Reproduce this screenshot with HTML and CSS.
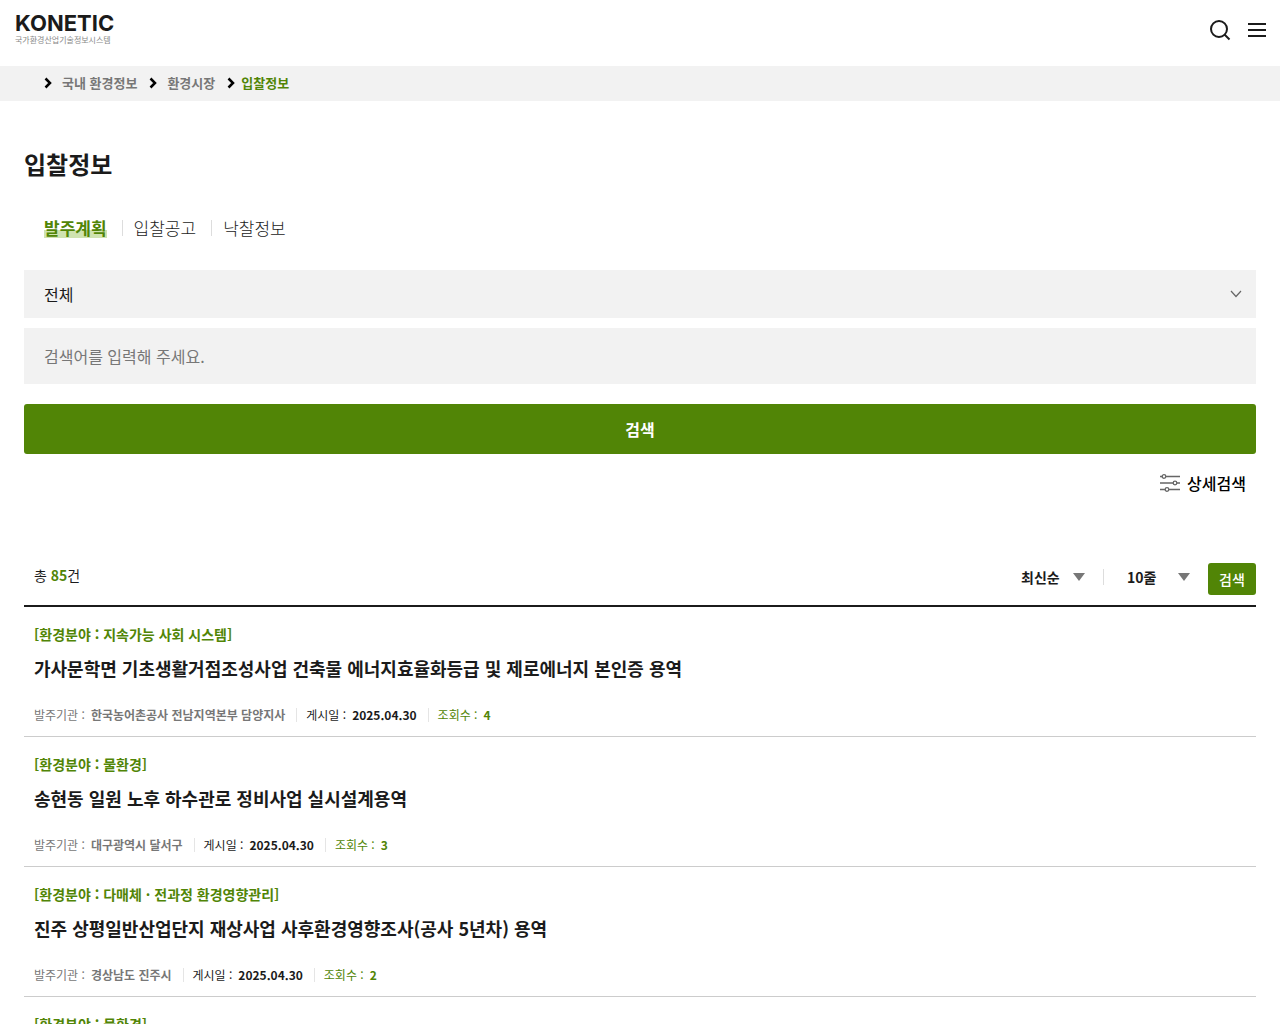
FILE: index.html
```html
<!DOCTYPE html>
<html lang="ko">
<head>
<meta charset="utf-8">
<meta name="viewport" content="width=device-width, initial-scale=1">
<title>입찰정보 | KONETIC</title>
<link rel="stylesheet" href="styles.css">
</head>
<body>
<header class="header">
  <a href="#" class="logo">
    <span class="logo-name">KONETIC</span>
    <span class="logo-sub">국가환경산업기술정보시스템</span>
  </a>
  <div class="header-tools">
    <button type="button" class="icon-button" aria-label="검색 열기">
      <svg width="22" height="22" viewBox="0 0 22 22" fill="none" stroke="#1b1b1b" stroke-width="2"><circle cx="10" cy="10" r="8"/><path d="M15.500 15.500L20.500 20.500"/></svg>
    </button>
    <button type="button" class="icon-button" aria-label="전체 메뉴">
      <svg width="18" height="22" viewBox="0 0 18 22" fill="none" stroke="#1b1b1b" stroke-width="2"><path d="M0 5H18M0 11H18M0 17H18"/></svg>
    </button>
  </div>
</header>

<nav class="breadcrumb" aria-label="현재 위치">
  <svg class="chevron" viewBox="0 0 8 12"><path d="M1.500 1.500L6 6L1.500 10.500"/></svg>
  <a href="#">국내 환경정보</a>
  <svg class="chevron" viewBox="0 0 8 12"><path d="M1.500 1.500L6 6L1.500 10.500"/></svg>
  <a href="#">환경시장</a>
  <svg class="chevron" viewBox="0 0 8 12"><path d="M1.500 1.500L6 6L1.500 10.500"/></svg>
  <a href="#" class="current" aria-current="page">입찰정보</a>
</nav>

<main class="content">
  <h1 class="page-title">입찰정보</h1>

  <nav class="tabs" aria-label="입찰정보 구분">
    <a href="#" class="tab tab-active"><span>발주계획</span></a>
    <a href="#" class="tab">입찰공고</a>
    <a href="#" class="tab">낙찰정보</a>
  </nav>

  <form class="search">
    <div class="select-box">
      <select class="search-select" aria-label="검색 구분"><option>전체</option></select>
      <svg class="select-arrow" width="12" height="8" viewBox="0 0 12 8" fill="none" stroke="#666" stroke-width="1.200"><path d="M1 1L6 6.500L11 1"/></svg>
    </div>
    <input class="search-input" type="text" aria-label="검색어" placeholder="검색어를 입력해 주세요.">
    <button type="button" class="search-button">검색</button>
    <button type="button" class="detail-button">
      <svg width="20" height="18" viewBox="0 0 20 18" fill="#fff" stroke="#666" stroke-width="1.300"><path d="M0 2.500H20M0 9H20M0 15.500H20"/><circle cx="4" cy="2.500" r="1.800"/><circle cx="15" cy="9" r="1.800"/><circle cx="7" cy="15.500" r="1.800"/></svg>
      상세검색
    </button>
  </form>

  <div class="list-head">
    <p class="total">총 <strong>85</strong>건</p>
    <form class="sort">
      <div class="sort-box">
        <select class="sort-select" aria-label="정렬"><option>최신순</option></select>
        <svg class="sort-arrow" width="12" height="8" viewBox="0 0 12 8"><path d="M0 0H12L6 8Z"/></svg>
      </div>
      <div class="sort-box sort-box-rows">
        <select class="sort-select" aria-label="표시 줄 수"><option>10줄</option></select>
        <svg class="sort-arrow" width="12" height="8" viewBox="0 0 12 8"><path d="M0 0H12L6 8Z"/></svg>
      </div>
      <button type="button" class="sort-button">검색</button>
    </form>
  </div>

  <ul class="list">
    <li class="item">
      <p class="category">[환경분야 : 지속가능 사회 시스템]</p>
      <h2 class="item-title"><a href="#">가사문학면 기초생활거점조성사업 건축물 에너지효율화등급 및 제로에너지 본인증 용역</a></h2>
      <ul class="meta">
        <li class="agency">발주기관 : <strong>한국농어촌공사 전남지역본부 담양지사</strong></li>
        <li>게시일 : <strong>2025.04.30</strong></li>
        <li class="views">조회수 : <strong>4</strong></li>
      </ul>
    </li>
    <li class="item">
      <p class="category">[환경분야 : 물환경]</p>
      <h2 class="item-title"><a href="#">송현동 일원 노후 하수관로 정비사업 실시설계용역</a></h2>
      <ul class="meta">
        <li class="agency">발주기관 : <strong>대구광역시 달서구</strong></li>
        <li>게시일 : <strong>2025.04.30</strong></li>
        <li class="views">조회수 : <strong>3</strong></li>
      </ul>
    </li>
    <li class="item">
      <p class="category">[환경분야 : 다매체 · 전과정 환경영향관리]</p>
      <h2 class="item-title"><a href="#">진주 상평일반산업단지 재상사업 사후환경영향조사(공사 5년차) 용역</a></h2>
      <ul class="meta">
        <li class="agency">발주기관 : <strong>경상남도 진주시</strong></li>
        <li>게시일 : <strong>2025.04.30</strong></li>
        <li class="views">조회수 : <strong>2</strong></li>
      </ul>
    </li>
    <li class="item">
      <p class="category">[환경분야 : 물환경]</p>
    </li>
  </ul>
</main>
</body>
</html>
```

FILE: styles.css
```css
* {
  box-sizing: border-box;
  margin: 0;
  padding: 0;
}

html {
  scrollbar-width: none;
}

body {
  background: #fff;
  color: #1b1b1b;
  font-family: "Noto Sans CJK KR", sans-serif;
  font-size: 14px;
  line-height: 20px;
}

a {
  color: inherit;
  text-decoration: none;
}

ul {
  list-style: none;
}

button,
input,
select {
  border: 0;
  border-radius: 0;
  background: none;
  color: inherit;
  font: inherit;
}

button,
select {
  cursor: pointer;
}

select {
  appearance: none;
}

/* Header */
.header {
  display: flex;
  justify-content: space-between;
  align-items: flex-start;
  height: 66px;
  padding: 12px 14px 0 15px;
}

.logo {
  display: flex;
  flex-direction: column;
}

.logo-name {
  font-family: Inter, sans-serif;
  font-size: 22px;
  font-weight: 700;
  line-height: 23px;
}

.logo-sub {
  color: #888;
  font-size: 8px;
  line-height: 10px;
}

.header-tools {
  display: flex;
  gap: 17px;
  padding-top: 7px;
}

.icon-button {
  display: flex;
}

/* Breadcrumb */
.breadcrumb {
  display: flex;
  align-items: center;
  gap: 10px;
  height: 35px;
  padding: 0 44px 2px;
  background: #f2f2f2;
  color: #777;
  font-size: 13px;
  font-weight: 700;
}

.breadcrumb a + .chevron {
  margin-left: 2px;
}

.breadcrumb .current {
  margin-left: -4px;
  color: #518506;
}

.chevron {
  width: 8px;
  height: 12px;
  fill: none;
  stroke: #000;
  stroke-width: 2.5;
}

/* Page title and tabs */
.content {
  padding: 45px 24px 0;
}

.page-title {
  font-size: 24px;
  font-weight: 700;
  line-height: 36px;
}

.tabs {
  display: flex;
  align-items: center;
  margin-top: 33px;
  padding-left: 20px;
  font-size: 17px;
  font-weight: 300;
  line-height: 26px;
}

.tab {
  display: flex;
  align-items: center;
}

.tab + .tab::before {
  content: "";
  width: 1px;
  height: 16px;
  margin: 0 11px 0 15px;
  background: #ddd;
}

.tab-active {
  color: #518506;
  font-weight: 700;
}

.tab-active span {
  background: linear-gradient(transparent 60%, #cfe3b0 60%);
  line-height: 20px;
}

/* Search form */
.search {
  display: flex;
  flex-direction: column;
  margin-top: 29px;
  font-size: 16px;
}

.select-box,
.sort-box {
  display: grid;
  align-items: center;
}

.select-box > *,
.sort-box > * {
  grid-area: 1 / 1;
}

.search-select {
  width: 100%;
  height: 48px;
  padding: 0 20px;
  background: #f2f2f2;
}

.select-arrow {
  justify-self: end;
  margin-right: 14px;
  pointer-events: none;
}

.search-input {
  height: 56px;
  margin-top: 10px;
  padding: 0 20px;
  background: #f2f2f2;
}

.search-input::placeholder {
  color: #777;
  opacity: 1;
}

.search-button {
  height: 50px;
  margin-top: 20px;
  border-radius: 3px;
  background: #518506;
  color: #fff;
  font-weight: 700;
}

.detail-button {
  display: flex;
  align-items: center;
  align-self: flex-end;
  gap: 7px;
  margin-top: 17px;
  padding-right: 10px;
  color: #000;
  font-weight: 500;
  line-height: 24px;
}

/* List heading */
.list-head {
  display: flex;
  justify-content: space-between;
  margin-top: 68px;
  padding: 0 0 10px 10px;
  border-bottom: 2px solid #1b1b1b;
}

.total {
  padding-top: 2px;
}

.total strong {
  color: #518506;
}

.sort {
  display: flex;
  align-items: flex-start;
}

.sort-box {
  height: 28px;
}

.sort-select {
  width: 82px;
  height: 28px;
  font-weight: 700;
}

.sort-arrow {
  justify-self: end;
  margin-right: 18px;
  fill: #777;
  pointer-events: none;
}

.sort-box-rows::before {
  content: "";
  grid-area: 1 / 1;
  width: 1px;
  height: 16px;
  background: #ddd;
}

.sort-box-rows .sort-select {
  width: 105px;
  padding-left: 24px;
}

.sort-button {
  width: 48px;
  height: 32px;
  border-radius: 3px;
  background: #518506;
  color: #fff;
  font-weight: 500;
}

/* Results */
.item {
  padding: 17px 10px 11px;
  border-bottom: 1px solid #ccc;
}

.category {
  color: #518506;
  font-weight: 700;
}

.item-title {
  margin-top: 11px;
  font-size: 18px;
  font-weight: 700;
  line-height: 26px;
}

.meta {
  display: flex;
  align-items: center;
  margin-top: 24px;
  font-size: 12px;
}

.meta li {
  display: flex;
  align-items: center;
  gap: 6px;
}

.meta li + li::before {
  content: "";
  width: 1px;
  height: 14px;
  margin: 0 3px 0 11px;
  background: #e5e5e5;
}

.meta .agency {
  color: #777;
}

.meta .views {
  color: #518506;
}
```
